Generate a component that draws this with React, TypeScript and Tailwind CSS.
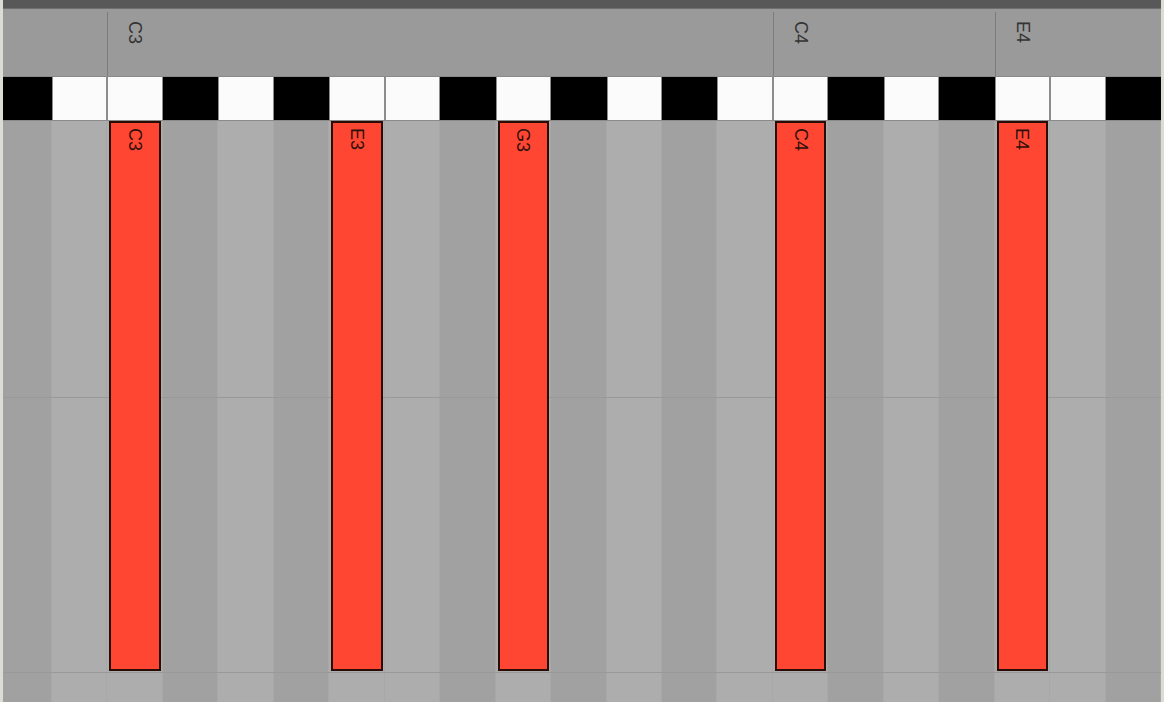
import React from "react";

type Col = { black: boolean; note?: string; header?: string };

const cols: Col[] = [
  { black: true },
  { black: false },
  { black: false, note: "C3", header: "C3" },
  { black: true },
  { black: false },
  { black: true },
  { black: false, note: "E3" },
  { black: false },
  { black: true },
  { black: false, note: "G3" },
  { black: true },
  { black: false },
  { black: true },
  { black: false },
  { black: false, note: "C4", header: "C4" },
  { black: true },
  { black: false },
  { black: true },
  { black: false, note: "E4", header: "E4" },
  { black: false },
  { black: true },
];

const gridCols = "grid grid-cols-[49px_repeat(20,minmax(0,1fr))]";

export default function App() {
  return (
    <div
      className="flex w-[1164px] h-[702px] overflow-hidden bg-[#a6a6a6]"
      style={{ fontFamily: '"Liberation Sans", Arial, sans-serif' }}
    >
      <div className="w-[3px] h-full bg-[#dcdcd6]" />
      <div className="flex flex-col flex-1 min-w-0 h-full">
        {/* top dark bar */}
        <div className="h-[9px] bg-[#585858] border-b border-[#707070]" />
        {/* header */}
        <div className={`${gridCols} h-[67px] bg-[#9a9a9a] pt-[3px]`}>
          {cols.map((c, i) => (
            <div
              key={i}
              className={c.header ? "border-l border-[#7c7c7c] relative" : ""}
            >
              {c.header && (
                <span className="absolute left-[18px] top-[9px] [writing-mode:vertical-rl] text-[18px] leading-none text-[#333333]">
                  {c.header}
                </span>
              )}
            </div>
          ))}
        </div>
        {/* keyboard */}
        <div
          className={`${gridCols} h-[45px] bg-[#8a8a8a] border-y border-[#8a8a8a]`}
        >
          {cols.map((c, i) => (
            <div
              key={i}
              className={
                c.black
                  ? "bg-black"
                  : "bg-[#fbfbfb] border-x border-[#8c8c8c]"
              }
            />
          ))}
        </div>
        {/* lanes */}
        <div className="relative flex-1">
          <div className={`${gridCols} h-full`}>
            {cols.map((c, i) => (
              <div
                key={i}
                className={`${c.black ? "bg-[#a1a1a1]" : "bg-[#adadad]"} relative border-r border-[#a8a8a8]`}
              />
            ))}
          </div>
          {/* horizontal grid lines */}
          <div className="absolute left-0 right-0 top-[276px] h-px bg-[#999999]" />
          <div className="absolute left-0 right-0 top-[551px] h-px bg-[#999999]" />
          {/* notes */}
          <div className={`${gridCols} absolute inset-x-0 top-0 h-[550px]`}>
            {cols.map((c, i) => (
              <div key={i} className="px-[2px]">
                {c.note && (
                  <div className="h-full bg-[#ff4633] border-2 border-[#2a0c06] flex justify-center pt-[5px]">
                    <span className="[writing-mode:vertical-rl] text-[18px] leading-none text-[#2e100a]">
                      {c.note}
                    </span>
                  </div>
                )}
              </div>
            ))}
          </div>
        </div>
      </div>
      <div className="w-[3px] h-full bg-[#dcdcd6]" />
    </div>
  );
}
